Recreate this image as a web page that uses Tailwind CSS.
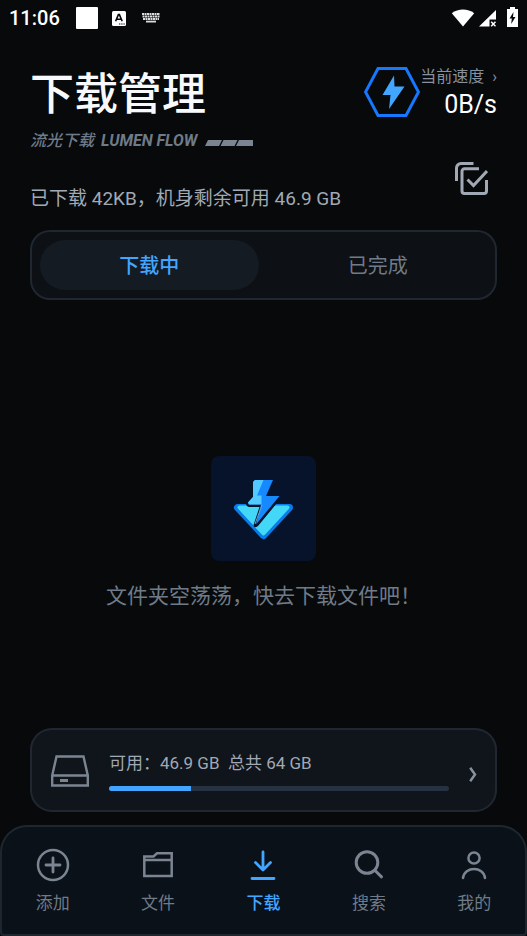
<!DOCTYPE html>
<html lang="zh-CN">
<head>
<meta charset="utf-8">
<meta name="viewport" content="width=device-width, initial-scale=1">
<title>下载管理</title>
<script src="https://cdn.jsdelivr.net/npm/@tailwindcss/browser@4"></script>
</head>
<body class="min-h-screen bg-[#07090b] font-[Roboto,'Noto_Sans_CJK_SC',sans-serif] text-[#6f7b88]">
<div class="flex min-h-screen flex-col">

  <!-- Status bar -->
  <div class="flex h-9 items-center justify-between px-[9px] text-white">
    <div class="flex items-center">
      <span class="w-[67px] text-[20px] leading-6 font-medium">11:06</span>
      <span class="mr-[14px] size-[22px] rounded-[1px] bg-white"></span>
      <svg class="mr-4 h-[15px] w-[14px]" viewBox="0 0 14 15"><rect width="14" height="15" rx="1.5" fill="#fff"/><path d="M3.6 10.2 6.4 3.6h1L10.2 10.2M4.6 8.2h4.6" fill="none" stroke="#07090b" stroke-width="1.6"/><path d="M7 13h1.4M9.2 13h1.4M11.4 13h1.4" stroke="#07090b" stroke-width="1.2"/></svg>
      <svg class="h-[10px] w-[18px]" viewBox="0 0 18 10" fill="none" stroke="#dcdcdc"><path d="M0 1h18M.5 3.5h17M1 6h16" stroke-width="1.9" stroke-dasharray="2 .5"/><path d="M4 8.6h10" stroke-width="1.8"/></svg>
    </div>
    <div class="flex items-center">
      <svg class="mr-1 h-[18px] w-6" viewBox="0 0 24 18" fill="#fff"><path d="M.8 4.2C7-.8 17-.8 23.200 4.200L12 17.500Z"/></svg>
      <svg class="mr-[11px] h-[17px] w-[17px]" viewBox="0 0 17 17"><path d="M17 0v9.500h-6.500V16.500H0Z" fill="#fff"/><path d="m12.200 11.800 4.300 4.500m0-4.500-4.300 4.500" stroke="#fff" stroke-width="1.500"/></svg>
      <svg class="mb-[2px] h-[20px] w-[11px]" viewBox="0 0 11 20"><path d="M3 0h5v2h3v18H0V2h3Z" fill="#fff"/><path d="M6.500 5 2.500 11.500h2.300L4.200 17l4.300-7H6Z" fill="#07090b"/></svg>
    </div>
  </div>

  <main class="flex flex-1 flex-col px-[30px]">
    <header class="flex justify-between pt-7">
      <div>
        <h1 class="text-[44px] leading-[62px] font-medium text-[#f8f9fc]">下载管理</h1>
        <p class="mt-[3px] flex items-center text-[16px] leading-6 font-bold italic">
          <span class="font-medium">流光下载</span><span class="ml-[7px]">LUMEN FLOW</span>
          <svg class="mt-1 ml-2 h-[6px] w-[48px]" viewBox="0 0 48 6" fill="#7b8592"><path d="M3 0h14l-3 6H0ZM18.500 0h14l-3 6h-14ZM34 0h14v6H31Z"/></svg>
        </p>
        <p class="mt-8 text-[19px] leading-7 text-[#a0a9b5]">已下载 42KB，机身剩余可用 46.9 GB</p>
      </div>
      <div class="flex flex-col items-end pt-[3px]">
        <a href="#speed" class="flex h-[50px] items-center">
          <svg class="h-[50px] w-[56px]" viewBox="0 0 56 50"><path d="M14 1.500h28L54.500 25 42 48.500H14L1.500 25Z" fill="none" stroke="#1677ff" stroke-width="3"/><path d="M30 8.500 18.500 28h8L25 42 40.500 19.500H30.500Z" fill="#42a5ff"/></svg>
          <span class="pt-[6px] text-right">
            <span class="flex items-center text-[16px] leading-5 text-[#88919d]">当前速度<span class="ml-2">›</span></span>
            <span class="block text-[25px] leading-9 text-white">0B/s</span>
          </span>
        </a>
        <button type="button" aria-label="批量选择" class="mt-[45px] mr-[9px]">
          <svg class="size-[33px]" viewBox="0 0 33 33" fill="none" stroke="#a0a9b5" stroke-width="3"><path d="M1.500 19V6a4.500 4.500 0 0 1 4.500-4.500H18.500"/><path d="M24 6.800H9.500a2.500 2.500 0 0 0-2.500 2.500V29a2.500 2.500 0 0 0 2.500 2.500H29a2.500 2.500 0 0 0 2.500-2.500V18M12.500 17.500l6 6L32 9"/></svg>
        </button>
      </div>
    </header>

    <div role="tablist" class="mt-[17px] flex h-[70px] gap-[10px] rounded-[20px] bg-[#0d1014] p-[10px] text-[20px] leading-7 inset-ring-2 inset-ring-[#202731]">
      <button type="button" role="tab" aria-selected="true" class="flex-1 rounded-full bg-[#141b22] pt-[2px] font-medium text-[#42a5ff]">下载中</button>
      <button type="button" role="tab" aria-selected="false" class="flex-1 rounded-full pt-[2px]">已完成</button>
    </div>

    <section class="flex flex-1 flex-col items-center justify-center pt-[38px]">
      <svg class="size-[105px]" viewBox="0 0 105 105">
        <rect width="105" height="105" rx="8" fill="#06132a"/>
        <path d="M26.500 51.500H78.500L52.500 79.500Z" fill="#087ce8" stroke="#087ce8" stroke-width="7" stroke-linejoin="round"/>
        <path d="M28.500 51.500H76.500L52.500 77.500Z" fill="#43d8f8" stroke="#43d8f8" stroke-width="4" stroke-linejoin="round"/>
        <path d="M35 44h33.500L47 70q-4 3-4.500-1l6-18H38Q34 50 35 44Z" fill="#06132a"/>
        <path d="M44 24h18L55 40h13.500L45 68.500 50 48.500H37.500L37 46.500 42 41V26Z" fill="#1689ff"/>
        <path d="M44 24h8.500L46 39.500h4.500V48.500H38L37 46.500 42 41V26Z" fill="#53caff"/>
        <path d="M51 49 44 68" stroke="#6aa9d0" stroke-width="1"/>
      </svg>
      <p class="mt-5 text-[21px] leading-[30px]">文件夹空荡荡，快去下载文件吧！</p>
    </section>

    <a href="#storage" class="flex h-[84px] items-center rounded-[22px] bg-[#10141b] pt-[2px] pr-5 pl-[21px] inset-ring-2 inset-ring-[#202731]">
      <svg class="h-[32px] w-[38px]" viewBox="0 0 38 32" fill="none" stroke="#7b8592" stroke-width="2.400"><path d="M1.200 20.500 5.500 1.500h27L36.800 20.500V30.500H1.200ZM1.200 20.500H36.800"/><path d="M9 25.500h8" stroke-width="3"/></svg>
      <div class="ml-5 flex-1">
        <p class="text-[17px] leading-6 whitespace-pre text-[#a0a9b5]">可用：46.9 GB  总共 64 GB</p>
        <div role="progressbar" aria-label="存储空间" aria-valuenow="24" aria-valuemin="0" aria-valuemax="100" class="mt-[11px] h-[5px] overflow-hidden rounded-full bg-[#263141]"><div class="h-full bg-[#42a5ff]" style="width:24%"></div></div>
      </div>
      <svg class="mt-[7px] ml-5 h-[15px] w-[8px]" viewBox="0 0 8 15" fill="none" stroke="#88919d" stroke-width="2.500"><path d="M1.200 .8 6 7.500 1.200 14.200"/></svg>
    </a>
  </main>

  <!-- Bottom navigation -->
  <nav class="mt-[13px] grid h-[111px] grid-cols-5 rounded-t-[27px] rounded-b-[4px] bg-[#0a1118] pt-[22px] text-[17px] leading-6 inset-ring-2 inset-ring-[#1e2630]">
    <a href="#add" class="flex flex-col items-center gap-2">
      <svg class="size-9" viewBox="0 0 36 36" fill="none" stroke="#7b8592" stroke-width="2.500" stroke-linecap="round"><circle cx="18" cy="18" r="15"/><path d="M18 11v14M11 18h14" stroke-width="2.800"/></svg>添加</a>
    <a href="#files" class="flex flex-col items-center gap-2">
      <svg class="size-9" viewBox="0 0 36 36" fill="none" stroke="#7b8592" stroke-width="2.500"><path d="M4.300 9.500H13.500L17 6.300H31.700V29H4.300ZM4.300 13H31.700"/></svg>文件</a>
    <a href="#downloads" aria-current="page" class="flex flex-col items-center gap-2 font-medium text-[#42a5ff]">
      <svg class="size-9" viewBox="0 0 36 36" fill="none" stroke="#42a5ff" stroke-linecap="round" stroke-linejoin="round"><path d="M18 5v18M10.500 15.500 18 23l7.500-7.500M7 31.500h22" stroke-width="2.800"/></svg>下载</a>
    <a href="#search" class="flex flex-col items-center gap-2">
      <svg class="size-9" viewBox="0 0 36 36" fill="none" stroke="#7b8592" stroke-width="3" stroke-linecap="round"><circle cx="16" cy="15.500" r="10.800"/><path d="m24 23.500 6.500 6.300"/></svg>搜索</a>
    <a href="#me" class="flex flex-col items-center gap-2">
      <svg class="size-9" viewBox="0 0 36 36" fill="none" stroke="#7b8592" stroke-width="2.500" stroke-linecap="round"><circle cx="18" cy="11" r="5.600"/><path d="M7 31c1.500-12 20.500-12 22 0"/></svg>我的</a>
  </nav>
</div>
</body>
</html>
